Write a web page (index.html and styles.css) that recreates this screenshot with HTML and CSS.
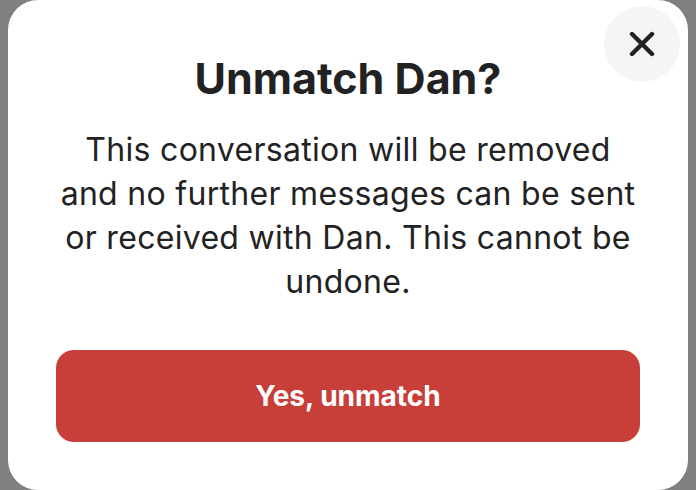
FILE: index.html
```html
<!DOCTYPE html>
<html lang="en">
<head>
    <meta charset="UTF-8">
    <meta name="viewport" content="width=device-width, initial-scale=1.0">
    <title>Unmatch</title>
    <link rel="stylesheet" href="styles.css">
</head>
<body>
    <div class="modal">
        <button class="close" aria-label="Close">
            <svg width="26" height="26" viewBox="0 0 26 26">
                <path d="M3 3 L23 23 M23 3 L3 23" stroke="#222" stroke-width="4.4" stroke-linecap="round" fill="none"/>
            </svg>
        </button>
        <h1 class="title">Unmatch Dan?</h1>
        <p class="message">This conversation will be removed and no further messages can be sent or received with Dan. This cannot be undone.</p>
        <button class="confirm">Yes, unmatch</button>
    </div>
</body>
</html>
```

FILE: styles.css
```css
html, body {
    height: 100%;
}
body {
    margin: 0;
    padding: 0 8px;
    background-color: #808080;
    font-family: Inter, "Noto Sans", sans-serif;
    color: #222;
    box-sizing: border-box;
}
.modal {
    position: relative;
    box-sizing: border-box;
    height: 100%;
    background-color: white;
    border-radius: 30px;
    padding: 52px 48px 0;
    display: flex;
    flex-direction: column;
    align-items: center;
}
.close {
    position: absolute;
    top: 6px;
    right: 8px;
    width: 76px;
    height: 76px;
    border: none;
    border-radius: 50%;
    background-color: #f4f5f7;
    display: flex;
    justify-content: center;
    align-items: center;
    padding: 0;
    cursor: pointer;
}
.title {
    margin: 0;
    font-size: 43px;
    font-weight: 700;
    line-height: 52px;
}
.message {
    margin: 24px 0 0;
    max-width: 580px;
    font-size: 32px;
    letter-spacing: 0.3px;
    line-height: 44px;
    text-align: center;
}
.confirm {
    margin-top: 46px;
    width: 100%;
    height: 92px;
    border: none;
    border-radius: 18px;
    background-color: #c83f3a;
    color: white;
    font-family: inherit;
    font-size: 28px;
    font-weight: 700;
    cursor: pointer;
}
```
